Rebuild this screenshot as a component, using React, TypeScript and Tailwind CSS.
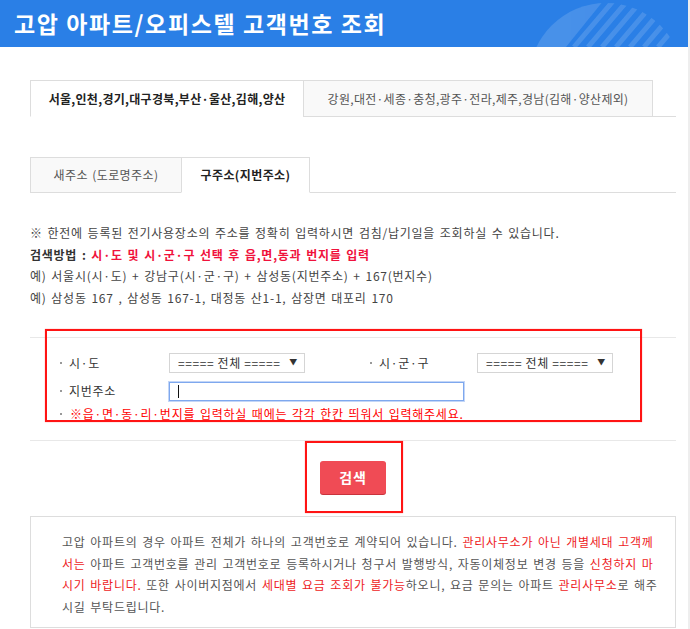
import { useState } from 'react'

// 상단 타이틀 바의 장식 원 (반은 채움, 반은 사선 줄무늬)
function HeaderDeco() {
  const stripes = [0, 1, 2, 3, 4, 5, 6]
  return (
    <svg className="absolute left-[528px] top-0" width="160" height="47" viewBox="0 0 160 47">
      <defs>
        <clipPath id="deco-circle">
          <circle cx="78" cy="80" r="77" />
        </clipPath>
      </defs>
      <g clipPath="url(#deco-circle)" fill="#ffffff">
        <polygon points="0,0 76,0 38,47 0,47" opacity="0.14" />
        {stripes.map((i) => (
          <line
            key={i}
            x1={46 + i * 14}
            y1={47}
            x2={86 + i * 14}
            y2={0}
            stroke="#ffffff"
            strokeWidth="5"
            opacity="0.14"
          />
        ))}
      </g>
    </svg>
  )
}

function Tab({ label, active, className }: { label: string; active?: boolean; className: string }) {
  return (
    <div
      className={
        active
          ? `relative -mb-px flex items-center justify-center border border-b-white border-[#dddddd] bg-white font-bold text-[#222] ${className}`
          : `relative -mb-px flex items-center justify-center border border-[#dddddd] bg-[#f9f9f9] text-[#555] ${className}`
      }
    >
      {label}
    </div>
  )
}

// select 모양의 박스
function FakeSelect() {
  return (
    <div className="relative w-[136px] h-[20px]">
      <select className="appearance-none w-full h-full border border-[#d5d5d5] bg-white pl-[8px] text-[12px] text-[#333] outline-none tracking-[0.6px]">
        <option>===== 전체 =====</option>
      </select>
      <span className="pointer-events-none absolute right-[7px] top-[3px] text-[8px] text-[#333]">▼</span>
    </div>
  )
}

export default function App() {
  const [jibun, setJibun] = useState('')
  const red = 'text-[#ee1c25]'

  return (
    <div className="relative w-[690px] min-h-[629px] bg-white border-r-2 border-[#eeeeee] font-['Noto_Sans_CJK_KR','Noto_Sans',sans-serif] text-[12px] tracking-[0.75px] [word-spacing:1.3px]">
      {/* 타이틀 */}
      <div className="relative h-[47px] overflow-hidden bg-[#2a7fe6] pl-[14px] flex items-center">
        <h1 className="text-[23px] font-bold text-white tracking-[1.6px] [word-spacing:0px]">고압 아파트/오피스텔 고객번호 조회</h1>
        <HeaderDeco />
      </div>

      <div className="w-[676px] pl-[30px] pt-[33px]">
        {/* 지역 탭 */}
        <div className="flex h-[37px] border-b border-[#dddddd] text-[12px] tracking-[0.3px] [word-spacing:0px]">
          <Tab active label="서울,인천,경기,대구경북,부산·울산,김해,양산" className="w-[274px]" />
          <Tab label="강원,대전·세종·충청,광주·전라,제주,경남(김해·양산제외)" className="w-[350px] -ml-px" />
        </div>

        {/* 주소 구분 탭 */}
        <div className="mt-[40px] flex h-[36px] border-b border-[#dddddd] text-[12px] tracking-[0.4px]">
          <Tab label="새주소 (도로명주소)" className="w-[152px]" />
          <Tab active label="구주소(지번주소)" className="w-[129px] -ml-px" />
        </div>

        {/* 안내 문구 */}
        <div className="mt-[29px] leading-[21.7px] text-[#444]">
          <p>※ 한전에 등록된 전기사용장소의 주소를 정확히 입력하시면 검침/납기일을 조회하실 수 있습니다.</p>
          <p className="font-bold">
            <span className="text-[#333]">검색방법 : </span>
            <span className="text-[#f0123c]">시·도 및 시·군·구 선택 후 읍,면,동과 번지를 입력</span>
          </p>
          <p>예) 서울시(시·도) + 강남구(시·군·구) + 삼성동(지번주소) + 167(번지수)</p>
          <p>예) 삼성동 167 , 삼성동 167-1, 대정동 산1-1, 삼장면 대포리 170</p>
        </div>

        {/* 검색 폼 */}
        <div className="relative mt-[28px]">
          <div className="border-y border-[#e8e8e8] pt-[15px] pb-[18px] text-[#333]">
            <div className="flex items-center h-[20px]">
              <span className="ml-[30px] w-[2px] h-[2px] bg-[#999]" />
              <span className="ml-[7px] w-[100px]">시·도</span>
              <FakeSelect />
              <span className="ml-[65px] w-[2px] h-[2px] bg-[#999]" />
              <span className="ml-[7px] w-[98px]">시·군·구</span>
              <FakeSelect />
            </div>
            <div className="mt-[9px] flex items-center h-[19px]">
              <span className="ml-[30px] w-[2px] h-[2px] bg-[#999]" />
              <span className="ml-[7px] w-[100px]">지번주소</span>
              <div className="relative">
                <input
                  value={jibun}
                  onChange={(e) => setJibun(e.target.value)}
                  className="w-[295px] h-[19px] border border-[#7ea8ee] shadow-[0_0_0_1px_#c3d6f7] bg-white px-[8px] text-[12px] outline-none"
                />
                {jibun === '' && <span className="absolute left-[9px] top-[3px] w-px h-[13px] bg-[#111]" />}
              </div>
            </div>
            <div className="mt-[5px] flex items-center h-[16px]">
              <span className="ml-[30px] w-[2px] h-[2px] bg-[#999]" />
              <span className="ml-[8px] text-[#ff0000]">※읍·면·동·리·번지를 입력하실 때에는 각각 한칸 띄워서 입력해주세요.</span>
            </div>
          </div>
          {/* 강조 표시 (빨간 테두리) */}
          <div className="absolute left-[15px] top-[-8px] w-[597px] h-[93px] border-2 border-[#ff1414] shadow-[0_0_1px_#ff8080]" />

          <div className="relative flex justify-center pt-[20px] pb-[21px]">
            <button className="w-[66px] h-[33px] rounded-[3px] bg-[#f04b55] shadow-[0_1px_0_#c9333c] text-[14px] font-bold text-white">
              검색
            </button>
            <div className="absolute left-[275px] top-0 w-[98px] h-[72px] border-2 border-[#ff1414] shadow-[0_0_1px_#ff8080]" />
          </div>
        </div>

        {/* 유의사항 */}
        <div className="mt-[1px] border border-[#dddddd] pl-[31px] pt-[14px] pb-[9px] leading-[21.7px] text-[#555] whitespace-nowrap">
          <p>
            고압 아파트의 경우 아파트 전체가 하나의 고객번호로 계약되어 있습니다.{' '}
            <span className={red}>관리사무소가 아닌 개별세대 고객께</span>
          </p>
          <p>
            <span className={red}>서는</span> 아파트 고객번호를 관리 고객번호로 등록하시거나 청구서 발행방식, 자동이체정보 변경 등을{' '}
            <span className={red}>신청하지 마</span>
          </p>
          <p>
            <span className={red}>시기 바랍니다.</span> 또한 사이버지점에서{' '}
            <span className={red}>세대별 요금 조회가 불가능</span>하오니, 요금 문의는 아파트{' '}
            <span className={red}>관리사무소</span>로 해주
          </p>
          <p>시길 부탁드립니다.</p>
        </div>
      </div>
    </div>
  )
}
